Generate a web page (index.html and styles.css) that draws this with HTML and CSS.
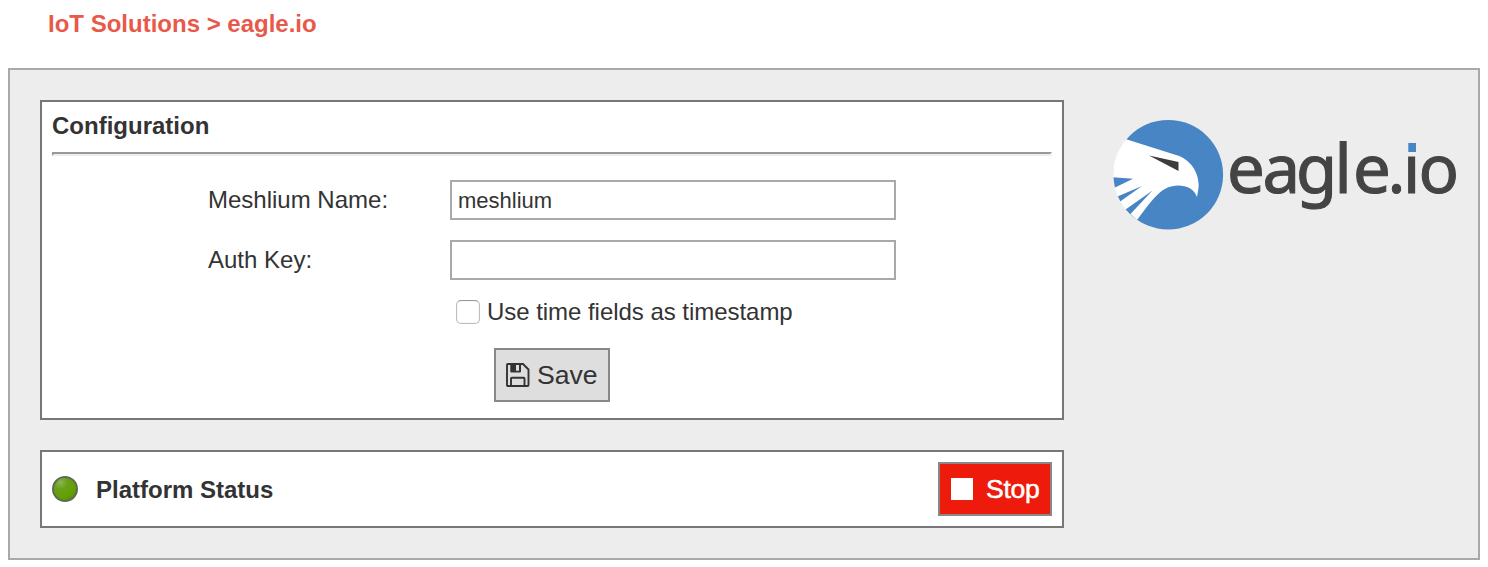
FILE: index.html
```html
<!DOCTYPE html>
<html lang="en">
<head>
<meta charset="utf-8">
<title>IoT Solutions &gt; eagle.io</title>
<link rel="stylesheet" href="styles.css">
</head>
<body>
<h1 class="breadcrumb">IoT Solutions &gt; eagle.io</h1>
<main class="frame">
  <div class="panels">
    <section class="panel config">
      <h2 class="title">Configuration</h2>
      <div class="rule"></div>
      <form class="form">
        <div class="row"><label class="label" for="name">Meshlium Name:</label><input class="input" id="name" type="text" value="meshlium"></div>
        <div class="row"><label class="label" for="key">Auth Key:</label><input class="input" id="key" type="text"></div>
        <label class="check"><input class="box" type="checkbox"><span>Use time fields as timestamp</span></label>
        <button class="button save" type="button">
          <svg class="disk" width="24" height="24" viewBox="0 0 24 24"><path d="M2 1H17L22.500 6.500V22Q22.500 23 21.500 23H2Q1 23 1 22V2Q1 1 2 1Z" fill="none" stroke="#333" stroke-width="1.900"/><path d="M5 23V15.500Q5 14.700 5.800 14.700H17.700Q18.500 14.700 18.500 15.500V23" fill="none" stroke="#333" stroke-width="1.900"/><path fill="#333" fill-rule="evenodd" d="M4.300 1H15V8.500Q15 9.500 14 9.500H5.300Q4.300 9.500 4.300 8.500ZM10 2V7.800H13V2Z"/></svg>
          <span>Save</span>
        </button>
      </form>
    </section>
    <section class="panel status">
      <span class="led"></span>
      <h2 class="status-title">Platform Status</h2>
      <button class="button stop" type="button"><span class="square"></span><span>Stop</span></button>
    </section>
  </div>
  <svg class="logo" width="350" height="140" viewBox="1110 105 350 140" role="img" aria-label="eagle.io">
    <defs><clipPath id="disc"><circle cx="1168.3" cy="174.7" r="55.2"/></clipPath></defs>
    <circle cx="1168.3" cy="174.7" r="54.8" fill="#4785c5"/>
    <g clip-path="url(#disc)">
      <path fill="#fff" d="M1108 133L1127 139.500L1176 155C1191 159 1200 174 1198.500 188L1197 197C1194 189 1187 185.500 1178 185.500C1162 186 1155 196 1137 220L1130.500 214L1152.500 190.500L1122 212L1118 203L1142 186L1114 198L1112 189L1133 178.700L1108 177Z"/>
    </g>
    <path fill="#3c3c3c" d="M1149 155.500L1178.500 162V171Z"/>
    <text class="wordmark" x="1227 1262.500 1296 1334.500 1353 1387.500 1403 1418.500" y="193">eagle.io</text>
    <rect x="1406" y="138" width="13" height="16.500" fill="#ededed"/>
    <rect x="1408.300" y="143" width="7.700" height="9" fill="#4785c5"/>
  </svg>
</main>
</body>
</html>
```
FILE: styles.css
```css
* { box-sizing: border-box; }
body {
  margin: 0;
  padding: 0 8px;
  background: #fff;
  color: #333;
  font: 24px/28px "Liberation Sans", Arial, sans-serif;
}
.breadcrumb {
  margin: 0;
  padding: 10px 0 30px 40px;
  color: #e8594a;
  font-size: 24px;
  line-height: 28px;
}
.frame {
  display: flex;
  height: 492px;
  padding: 30px 0 30px 30px;
  border: 2px solid #a9a9a9;
  background: #ededed;
}
.panels { display: flex; flex: none; flex-direction: column; gap: 30px; width: 1024px; }
.panel { border: 2px solid #777; background: #fff; }
.config { height: 320px; padding: 10px; }
.title, .status-title { margin: 0; font-size: 24px; line-height: 28px; }
.rule { height: 4px; margin-top: 12px; border: solid; border-width: 2px; border-color: #999 #eee #eee #999; }
.form { display: flex; flex-direction: column; padding: 24px 0 0 156px; }
.row { display: flex; align-items: center; height: 40px; margin-bottom: 20px; }
.label { width: 242px; }
.input {
  width: 446px;
  height: 40px;
  padding: 1px 6px 0;
  border: 2px solid #a9a9a9;
  background: #fff;
  color: #333;
  font: 22px "Liberation Sans", Arial, sans-serif;
}
.check { display: flex; align-items: center; gap: 7px; height: 28px; margin: -2px 0 0 248px; letter-spacing: -0.04px; }
.box {
  appearance: none;
  width: 24px;
  height: 24px;
  margin: 0;
  border: 1.5px solid #bcbcbc;
  border-top-color: #999;
  border-radius: 5px;
  background: #fff;
  box-shadow: inset 0 0 1px #bbb;
}
.button {
  display: flex;
  align-items: center;
  height: 54px;
  padding: 0 10px;
  border: 2px solid #888;
  font: 26.6px "Liberation Sans", Arial, sans-serif;
}
.save { width: 116px; margin: 22px 0 0 286px; gap: 7px; background: #dedede; color: #333; }
.disk { flex: none; }
.status { display: flex; align-items: center; height: 78px; padding: 0 10px; }
.led {
  width: 26px;
  height: 26px;
  border: 2px solid #616a58;
  border-radius: 50%;
  background: radial-gradient(circle at 30% 20%, #8bb553 0, #6a9f18 30%, #62a000 65%, #4b8200 100%);
}
.status-title { margin-left: 18px; padding-top: 2px; }
.stop { width: 114px; margin-left: auto; gap: 13px; padding-left: 11px; background: #ee1b0c; color: #fff; letter-spacing: -0.3px; -webkit-text-stroke: 0.5px #fff; }
.square { flex: none; width: 22px; height: 22px; background: #fff; }
.logo { margin: 5px 0 0 46px; flex: none; overflow: visible; }
.wordmark { font-family: "Noto Sans", sans-serif; font-size: 67px; fill: #444; stroke: #444; stroke-width: 1.1px; }
```
